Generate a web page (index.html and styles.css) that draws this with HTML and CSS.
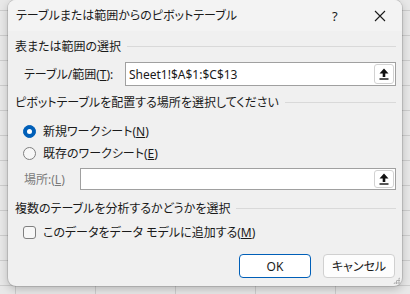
FILE: index.html
```html
<!DOCTYPE html>
<html lang="ja">
<head>
    <meta charset="UTF-8">
    <title>ピボットテーブル</title>
    <link rel="stylesheet" href="styles.css">
</head>
<body>
    <div class="dialog">
        <div class="titlebar">
            <span class="title">テーブルまたは範囲からのピボットテーブル</span>
            <span class="help">?</span>
            <span class="close">
                <svg width="12" height="12" viewBox="0 0 12 12"><path d="M1 1 L11 11 M11 1 L1 11" stroke="#1a1a1a" stroke-width="1.1" fill="none"/></svg>
            </span>
        </div>
        <div class="content">
            <div class="group-head"><span>表または範囲の選択</span></div>
            <div class="field-row first">
                <label class="label">テーブル/範囲(<u>T</u>):</label>
                <div class="refbox">
                    <span class="value">Sheet1!$A$1:$C$13</span>
                    <button class="collapse">
                        <svg width="10" height="12" viewBox="0 0 10 12"><path d="M5 0.5 L9.5 5.5 L6.3 5.5 L6.3 9 L3.7 9 L3.7 5.5 L0.5 5.5 Z" fill="#111"/><rect x="0.5" y="10.3" width="9" height="1.4" fill="#111"/></svg>
                    </button>
                </div>
            </div>

            <div class="group-head second"><span>ピボットテーブルを配置する場所を選択してください</span></div>
            <div class="option first-option">
                <span class="radio checked"></span>
                <span>新規ワークシート(<u>N</u>)</span>
            </div>
            <div class="option">
                <span class="radio"></span>
                <span>既存のワークシート(<u>E</u>)</span>
            </div>
            <div class="field-row location">
                <label class="label disabled">場所:(<u>L</u>)</label>
                <div class="refbox">
                    <span class="value"></span>
                    <button class="collapse">
                        <svg width="10" height="12" viewBox="0 0 10 12"><path d="M5 0.5 L9.5 5.5 L6.3 5.5 L6.3 9 L3.7 9 L3.7 5.5 L0.5 5.5 Z" fill="#111"/><rect x="0.5" y="10.3" width="9" height="1.4" fill="#111"/></svg>
                    </button>
                </div>
            </div>

            <div class="group-head third"><span>複数のテーブルを分析するかどうかを選択</span></div>
            <div class="option check-option">
                <span class="checkbox"></span>
                <span>このデータをデータ モデルに追加する(<u>M</u>)</span>
            </div>

            <div class="buttons">
                <button class="btn default">OK</button>
                <button class="btn">キャンセル</button>
            </div>
        </div>
        <div class="grip"></div>
    </div>
</body>
</html>
```

FILE: styles.css
```css
* {
    box-sizing: border-box;
}

body {
    margin: 0;
    padding: 0;
    width: 410px;
    height: 294px;
    overflow: hidden;
    font-family: "Noto Sans", "Noto Sans CJK JP", sans-serif;
    font-size: 12px;
    font-feature-settings: "palt";
    color: #1a1a1a;
    background-color: #e8e8e8;
    background-image:
        linear-gradient(to right, #cdcdcd 1px, transparent 1px),
        linear-gradient(to bottom, #cdcdcd 1px, transparent 1px);
    background-size: 80px 25px;
    background-position: 15px 10px;
}

.dialog {
    position: relative;
    margin-left: 8px;
    width: 394px;
    height: 286px;
    background-color: #f0f0f0;
    border-radius: 8px;
    box-shadow: 0 0 0 1px rgba(0, 0, 0, 0.12), 0 3px 10px rgba(0, 0, 0, 0.22);
}

.titlebar {
    height: 31px;
    display: flex;
    align-items: center;
    padding-left: 8px;
    background-color: #f3f3f3;
    border-radius: 8px 8px 0 0;
}

.title {
    flex-grow: 1;
    line-height: 16px;
}

.help {
    width: 14px;
    font-size: 13px;
    margin-right: 28px;
}

.close {
    display: flex;
    margin-right: 16px;
}

.content {
    padding: 0 6px 0 7px;
}

.group-head {
    display: flex;
    align-items: center;
    height: 20px;
    margin-top: 5px;
}

.group-head::after {
    content: "";
    flex-grow: 1;
    height: 1px;
    background-color: #d9d9d9;
    margin-left: 6px;
}

.group-head.second {
    margin-top: 6px;
}

.group-head.third {
    margin-top: 8px;
}

.field-row {
    display: flex;
    align-items: center;
    margin-top: 6px;
    height: 24px;
}

.field-row.location {
    margin-top: 5px;
    height: 22px;
}

.label {
    width: 110px;
    padding-left: 9px;
}

.location .label {
    width: 65px;
}

.label.disabled {
    color: #7a7a7a;
}

.refbox {
    flex-grow: 1;
    height: 100%;
    display: flex;
    align-items: center;
    background-color: #fff;
    border: 1px solid #a0a0a0;
    padding: 0 1px 0 3px;
}

.value {
    flex-grow: 1;
    font-size: 12px;
}

.collapse {
    width: 20px;
    height: calc(100% - 2px);
    display: flex;
    align-items: center;
    justify-content: center;
    padding: 0;
    background-color: #fff;
    border: 1px solid #d2d2d2;
    border-radius: 3px;
}

.option {
    display: flex;
    align-items: center;
    height: 20px;
    margin-top: 2px;
    padding-left: 8px;
}

.option.first-option {
    margin-top: 9px;
}

.option.check-option {
    margin-top: 4px;
}

.radio {
    width: 13px;
    height: 13px;
    border-radius: 50%;
    border: 1px solid #7f7f7f;
    background-color: #f7f7f7;
    margin-right: 7px;
    display: flex;
    align-items: center;
    justify-content: center;
}

.radio.checked {
    border-color: #005fb8;
    background-color: #005fb8;
}

.radio.checked::after {
    content: "";
    width: 5px;
    height: 5px;
    border-radius: 50%;
    background-color: #fff;
}

.checkbox {
    width: 13px;
    height: 13px;
    border: 1px solid #7f7f7f;
    border-radius: 3px;
    background-color: #f7f7f7;
    margin-right: 7px;
}

.buttons {
    display: flex;
    justify-content: flex-end;
    gap: 12px;
    margin-top: 12px;
    padding-right: 1px;
}

.btn {
    width: 72px;
    height: 24px;
    font-family: inherit;
    font-size: 12px;
    font-feature-settings: "palt";
    color: #1a1a1a;
    background-color: #fdfdfd;
    border: 1px solid #d0d0d0;
    border-radius: 4px;
    padding: 0;
}

.btn.default {
    border-color: #005fb8;
    background-color: #fff;
}

.grip {
    position: absolute;
    right: 2px;
    bottom: 2px;
    width: 7px;
    height: 7px;
    background-image: radial-gradient(circle, #a8a8a8 0.8px, transparent 1px);
    background-size: 2.4px 2.4px;
    clip-path: polygon(100% 0, 100% 100%, 0 100%);
}
```
